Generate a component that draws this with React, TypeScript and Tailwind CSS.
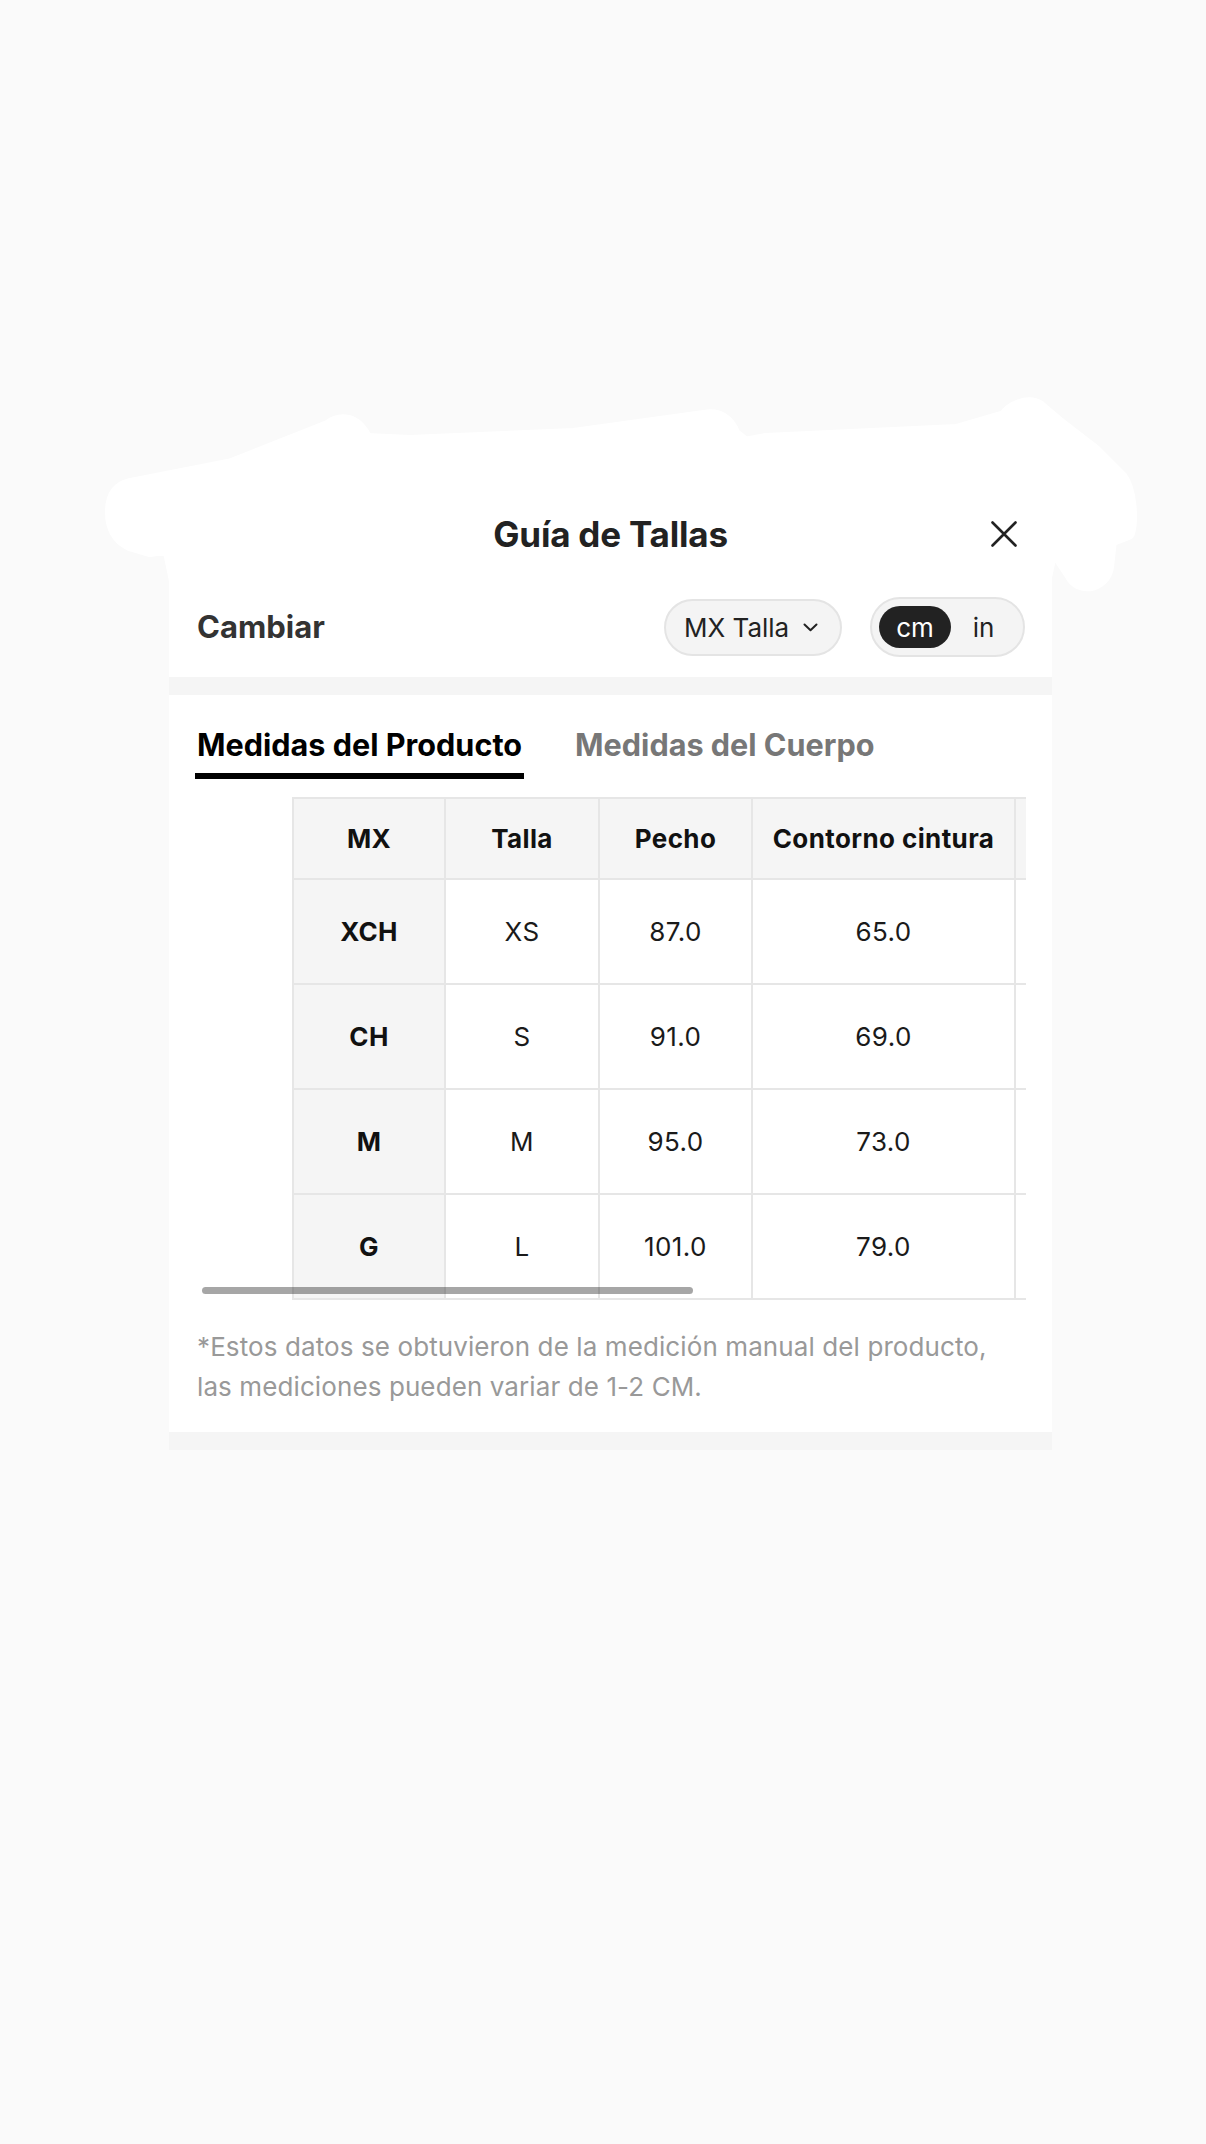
import React from "react";

const rows = [
  ["XCH", "XS", "87.0", "65.0", "92.0", "60.0"],
  ["CH", "S", "91.0", "69.0", "96.0", "61.0"],
  ["M", "M", "95.0", "73.0", "100.0", "62.0"],
  ["G", "L", "101.0", "79.0", "106.0", "63.5"],
];

const headers = ["MX", "Talla", "Pecho", "Contorno cintura", "Cadera", "Largo"];

function Blob() {
  // white scribble covering the top of the sheet
  const d =
    "M112 512 C112 495 118 488 130 485 L232 465 L328 427 C340 418 356 418 366 440 L410 442 L574 435 L704 417 C718 414 728 420 734 435 L745 444 L766 440 L957 431 L1005 417 C1010 408 1028 400 1039 407 L1059 424 L1094 451 L1121 478 C1130 490 1132 520 1128 533 L1110 540 L1107 567 C1104 585 1082 590 1073 577 L1052 545 L1040 600 L180 600 L169 547 L150 550 L130 544 C118 538 112 528 112 512 Z";
  return (
    <svg
      className="absolute left-0 top-0"
      width={1206}
      height={640}
      viewBox="0 0 1206 640"
    >
      <path d={d} fill="#ffffff" stroke="#ffffff" strokeWidth={14} strokeLinejoin="round" />
    </svg>
  );
}

function Chevron() {
  return (
    <svg width="15" height="9" viewBox="0 0 15 9" fill="none">
      <path d="M1.5 1.5 L7.5 7.2 L13.5 1.5" stroke="#222" strokeWidth="2" strokeLinecap="round" strokeLinejoin="round" />
    </svg>
  );
}

function CloseIcon() {
  return (
    <svg width="26" height="26" viewBox="0 0 26 26" fill="none">
      <path d="M1.5 1.5 L24.5 24.5 M24.5 1.5 L1.5 24.5" stroke="#222" strokeWidth="2.6" strokeLinecap="round" />
    </svg>
  );
}

export default function App() {
  return (
    <div className="relative min-h-[2144px] w-full bg-[#fafafa] font-['Inter','Noto_Sans',sans-serif] text-[#222]">
      <Blob />
      <div className="relative pt-[491px]">
        <div className="ml-[169px] w-[883px] bg-white">
          {/* header */}
          <div className="grid h-[86px] grid-cols-[1fr_auto_1fr] items-center">
            <div />
            <h2 className="text-[35px] font-bold leading-none tracking-[-0.2px] text-[#222]">
              Guía de Tallas
            </h2>
            <div className="flex justify-end pr-[35px]">
              <CloseIcon />
            </div>
          </div>

          {/* switch row */}
          <div className="flex h-[100px] items-center justify-between pl-[28px] pr-[27px]">
            <span className="text-[31px] font-bold text-[#333]">Cambiar</span>
            <div className="flex items-center gap-[28px]">
              <button className="flex h-[57px] w-[178px] items-center gap-[14px] rounded-full border-2 border-[#e4e4e4] bg-[#f4f4f4] pl-[18px] text-[26px] text-[#222]">
                MX Talla
                <Chevron />
              </button>
              <div className="flex h-[60px] w-[155px] items-center rounded-full border-2 border-[#e4e4e4] bg-[#f4f4f4] px-[7px]">
                <span className="flex h-[42px] w-[72px] items-center justify-center rounded-full bg-[#222] text-[26px] text-white">
                  cm
                </span>
                <span className="flex flex-1 items-center justify-center text-[26px] text-[#222]">in</span>
              </div>
            </div>
          </div>

          <div className="h-[18px] bg-[#f5f5f5]" />

          {/* tabs */}
          <div className="flex gap-[51px] pl-[26px] pt-[35px]">
            <div className="flex flex-col">
              <span className="px-[2px] text-[30.6px] font-bold leading-none text-black">
                Medidas del Producto
              </span>
              <span className="mt-[12px] h-[6px] bg-black" />
            </div>
            <span className="text-[30.6px] font-bold leading-none text-[#777]">Medidas del Cuerpo</span>
          </div>

          {/* table */}
          <div className="relative ml-[28px] mr-[26px] mt-[18px] overflow-hidden">
            <table className="ml-[95px] w-[1304px] table-fixed border-collapse">
              <colgroup>
                <col className="w-[152px]" />
                <col className="w-[154px]" />
                <col className="w-[153px]" />
                <col className="w-[263px]" />
                <col className="w-[290px]" />
                <col className="w-[292px]" />
              </colgroup>
              <thead>
                <tr className="h-[81px] bg-[#f5f5f5]">
                  {headers.map((h) => (
                    <th
                      key={h}
                      className="border-2 border-[#e6e6e6] text-center text-[26px] font-bold tracking-[0.4px] text-[#111]"
                    >
                      {h}
                    </th>
                  ))}
                </tr>
              </thead>
              <tbody>
                {rows.map((r) => (
                  <tr key={r[0]} className="h-[105px]">
                    {r.map((c, i) => (
                      <td
                        key={i}
                        className={
                          i === 0
                            ? "border-2 border-[#e6e6e6] bg-[#f5f5f5] text-center text-[26px] font-bold tracking-[0.4px] text-[#111]"
                            : "border-2 border-[#e6e6e6] text-center text-[26px] tracking-[0.4px] text-[#1a1a1a]"
                        }
                      >
                        {c}
                      </td>
                    ))}
                  </tr>
                ))}
              </tbody>
            </table>
            <div className="absolute bottom-[6px] left-[5px] h-[7px] w-[491px] rounded-full bg-black/35" />
          </div>

          {/* note */}
          <p className="px-[28px] pb-[25px] pt-[27px] text-[26px] leading-[40px] tracking-[0.1px] text-[#999]">
            *Estos datos se obtuvieron de la medición manual del producto, las mediciones pueden variar de 1-2 CM.
          </p>

          <div className="h-[18px] bg-[#f5f5f5]" />
        </div>
      </div>
    </div>
  );
}
